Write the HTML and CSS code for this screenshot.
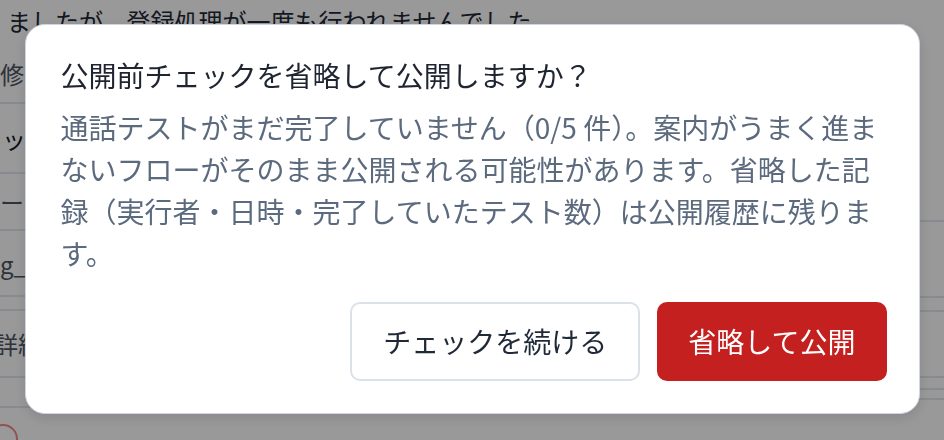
FILE: index.html
```html
<!DOCTYPE html>
<html lang="ja">
<head>
<meta charset="utf-8">
<title>公開前チェック</title>
<link rel="stylesheet" href="styles.css">
</head>
<body>
<div class="page">
  <div class="main-col">
    <div class="bg-msg">ましたが、登録処理が一度も行われませんでした</div>
    <div class="row row-a"><span class="bg-text muted">修正</span></div>
    <div class="row row-b"><span class="bg-text dark">ッ</span></div>
    <div class="row row-c"><span class="bg-text muted">ー</span></div>
    <div class="row row-d"><span class="bg-text muted">g_</span></div>
    <div class="row row-e"></div>
    <div class="row row-f"><span class="bg-text muted shift">詳細</span></div>
    <div class="row row-g"></div>
    <div class="row-h"><span class="bg-circle"></span></div>
  </div>
  <div class="side-col">
    <div class="srow s1"></div>
    <div class="srow s2"></div>
    <div class="srow s3"></div>
    <div class="srow s4"></div>
    <div class="srow s5"></div>
    <div class="srow s6"></div>
  </div>
</div>

<div class="overlay">
  <div class="dialog" role="dialog" aria-modal="true">
    <h2 class="dialog-title">公開前チェックを省略して公開しますか？</h2>
    <p class="dialog-body">通話テストがまだ完了していません（0/5 件）。案内がうまく進まないフローがそのまま公開される可能性があります。省略した記録（実行者・日時・完了していたテスト数）は公開履歴に残ります。</p>
    <div class="dialog-actions">
      <button class="btn btn-secondary" type="button">チェックを続ける</button>
      <button class="btn btn-danger" type="button">省略して公開</button>
    </div>
  </div>
</div>
</body>
</html>
```

FILE: styles.css
```css
* {
  box-sizing: border-box;
}

html, body {
  margin: 0;
  padding: 0;
}

body {
  font-family: "Noto Sans CJK JP", "Noto Sans", sans-serif;
  background: #ffffff;
  color: #1f2937;
}

/* background page */
.page {
  width: 944px;
  height: 440px;
  overflow: hidden;
  display: flex;
  background: #ffffff;
}

.main-col {
  flex: 1;
  display: flex;
  flex-direction: column;
  min-width: 0;
}

.bg-msg {
  height: 45px;
  line-height: 42px;
  padding-left: 7px;
  font-size: 24px;
  color: #1f2937;
  white-space: nowrap;
}

.row {
  display: flex;
  align-items: center;
  border-bottom: 2px solid #e2e8f0;
  font-size: 24px;
  white-space: nowrap;
  overflow: hidden;
}

.row-a { height: 59px; }
.row-b { height: 70px; }
.row-c { height: 57px; }
.row-d { height: 66px; }
.row-e { height: 14px; }
.row-f { height: 67px; }
.row-g { height: 30px; }

.row-h {
  flex: 1;
  position: relative;
}

.bg-text.muted { color: #4b5563; }
.bg-text.dark { color: #111827; padding-left: 2px; }
.bg-text.shift { margin-left: -6px; }

.bg-circle {
  position: absolute;
  left: -12px;
  top: 16px;
  width: 30px;
  height: 30px;
  border-radius: 50%;
  border: 2px solid #f08a8a;
}

.side-col {
  width: 120px;
  display: flex;
  flex-direction: column;
}

.srow {
  border-bottom: 2px solid #e2e8f0;
}

.s1 { height: 222px; }
.s2 { height: 76px; }
.s3 { height: 14px; }
.s4 { height: 66px; }
.s5 { height: 12px; }
.s6 { height: 10px; }

/* overlay + dialog */
.overlay {
  position: fixed;
  inset: 0;
  background: rgba(0, 0, 0, 0.4);
  display: flex;
  justify-content: center;
  align-items: flex-start;
  padding-top: 24px;
}

.dialog {
  width: 895px;
  background: #ffffff;
  border: 1px solid #cfd6e1;
  border-radius: 20px;
  box-shadow: 0 4px 14px rgba(0, 0, 0, 0.12);
  padding: 29px 32px 32px 35px;
}

.dialog-title {
  margin: 0 0 10px;
  font-size: 28px;
  line-height: 42px;
  font-weight: 400;
  color: #1e2430;
}

.dialog-body {
  margin: 0;
  font-size: 28px;
  line-height: 42px;
  color: #5c6a7e;
}

.dialog-actions {
  margin-top: 28px;
  display: flex;
  justify-content: flex-end;
  gap: 17px;
}

.btn {
  font-family: inherit;
  font-size: 28px;
  line-height: 41px;
  padding: 17px 31px;
  border-radius: 10px;
  border: 2px solid transparent;
  cursor: pointer;
}

.btn-secondary {
  background: #ffffff;
  border-color: #dbe1e9;
  color: #1f2937;
}

.btn-danger {
  padding-left: 29px;
  padding-right: 29px;
  background: #c42020;
  border-color: #c42020;
  color: #ffffff;
}
```
